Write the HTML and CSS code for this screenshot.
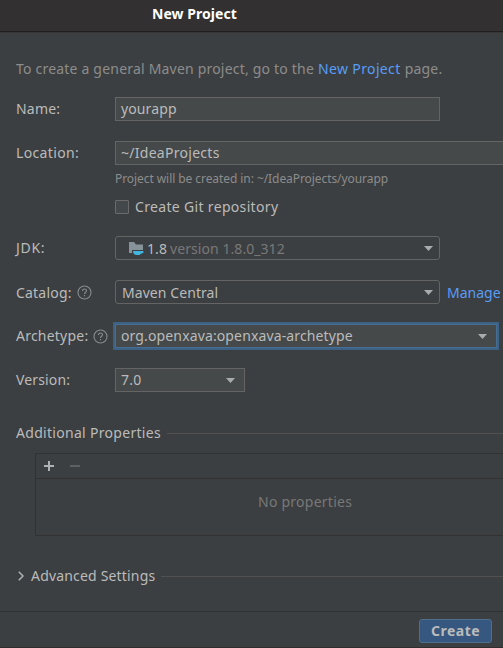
FILE: index.html
```
<!DOCTYPE html>
<html lang="en">
<head>
<meta charset="utf-8">
<title>New Project</title>
<link rel="stylesheet" href="styles.css">
</head>
<body>
<div class="dialog">
  <header class="titlebar"><span class="t-title">New Project</span></header>
  <main class="content">
    <p class="intro"><span class="t-intro1">To create a general Maven project, go to the</span> <a class="t-introlink">New Project</a> <span class="t-intro2">page.</span></p>

    <div class="row row-name">
      <label class="label"><span class="t-name">Name:</span></label>
      <div class="field w-main"><span class="t-yourapp">yourapp</span></div>
    </div>
    <div class="row row-location">
      <label class="label"><span class="t-location">Location:</span></label>
      <div class="field w-wide"><span class="t-path">~/IdeaProjects</span></div>
    </div>
    <div class="hint"><span class="t-hint">Project will be created in: ~/IdeaProjects/yourapp</span></div>
    <div class="check"><span class="box"></span><span class="t-git">Create Git repository</span></div>

    <div class="row row-jdk">
      <label class="label"><span class="t-jdk">JDK:</span></label>
      <div class="field combo jdk w-main">
        <svg class="folder" width="16" height="16" viewBox="0 0 16 16"><path d="M1 2h5l2 2.500h7V10H4v3H1z" fill="#87939a"/><path d="M5 11h9.500c1.500 0 1.500 2.400-.8 2.400h-.8c-.5 1-1.300 1.600-2.400 1.600H8.500C6.500 15 5 13.500 5 11z" fill="#40b6e0"/></svg>
        <span class="t-18">1.8</span><span class="muted t-version18">version 1.8.0_312</span>
        <svg class="arrow" width="9" height="5"><path d="M0 0h9L4.500 5z"/></svg>
      </div>
    </div>
    <div class="row row-catalog">
      <label class="label"><span class="t-catalog">Catalog:</span>
        <svg class="help" width="15" height="15" viewBox="0 0 15 15"><circle cx="7.500" cy="7.500" r="6.500"/><path d="M5.500 6c0-2.700 4-2.600 4-.2 0 1.500-2 1.500-2 3.200M7.500 10v1.300"/></svg>
      </label>
      <div class="field combo catalog w-main"><span class="t-central">Maven Central</span>
        <svg class="arrow" width="9" height="5"><path d="M0 0h9L4.500 5z"/></svg>
      </div>
      <a class="manage t-manage">Manage</a>
    </div>
    <div class="row row-archetype">
      <label class="label"><span class="t-archetype">Archetype:</span>
        <svg class="help" width="15" height="15" viewBox="0 0 15 15"><circle cx="7.500" cy="7.500" r="6.500"/><path d="M5.500 6c0-2.700 4-2.600 4-.2 0 1.500-2 1.500-2 3.200M7.500 10v1.300"/></svg>
      </label>
      <div class="field focused"><span class="t-org">org.openxava:openxava-archetype</span>
        <svg class="arrow" width="9" height="5"><path d="M0 0h9L4.500 5z"/></svg>
      </div>
    </div>
    <div class="row row-version">
      <label class="label"><span class="t-version">Version:</span></label>
      <div class="field w-small"><span class="t-70">7.0</span>
        <svg class="arrow" width="9" height="5"><path d="M0 0h9L4.500 5z"/></svg>
      </div>
    </div>

    <div class="section section-props"><span class="t-additional">Additional Properties</span><span class="rule"></span></div>
    <div class="table">
      <div class="toolbar">
        <svg width="10" height="10"><path d="M0 5h10M5 0v10" stroke="#afb1b3" stroke-width="2"/></svg>
        <svg width="10" height="10"><path d="M0 5h10" stroke="#5e5f60" stroke-width="2"/></svg>
      </div>
      <div class="empty"><span class="t-noprops">No properties</span></div>
    </div>

    <div class="section section-advanced">
      <svg class="chevron" width="6" height="10"><path d="M.8 .8L5 5 .8 9.200"/></svg>
      <span class="t-advanced">Advanced Settings</span><span class="rule"></span>
    </div>
  </main>
  <footer class="footer"><button class="create"><span class="t-create">Create</span></button></footer>
</div>
</body>
</html>
```

FILE: styles.css
```
* { box-sizing: border-box; }
body {
  margin: 0;
  background: #3c3f41;
  color: #bbbbbb;
  font: 14px/20px "Noto Sans", "Open Sans", sans-serif;
}
.dialog { width: 503px; height: 648px; overflow: hidden; display: flex; flex-direction: column; white-space: nowrap; }
.dialog span, .dialog a { flex-shrink: 0; }
.titlebar {
  height: 33px;
  flex: none;
  padding: 4px 0 0 152px;
  background: #333031;
  border-bottom: 1px solid #373737;
  box-shadow: inset 0 -1px #1f1f1f;
  color: #ffffff;
  font-weight: 700;
}
.content { flex: 1; padding: 26px 0 0 16px; min-height: 0; }
.intro { margin: 0; display: flex; gap: 4px; height: 20px; color: #8c8c8c; }
a { color: #589df6; }

.row { display: flex; align-items: center; height: 24px; }
.label { width: 99px; flex: none; display: flex; align-items: center; gap: 5px; }
.help { fill: none; stroke: #878b8d; stroke-width: 1.1; }
.field {
  height: 24px;
  flex: none;
  display: flex;
  align-items: center;
  padding: 0 6px 0 5px;
  background: #45494a;
  border: 1px solid #646464;
}
.w-main { width: 325px; }
.w-wide { width: 400px; }
.w-small { width: 130px; padding-right: 9px; }
.combo { background: #3c3f41; border-radius: 3px; }
.arrow { margin-left: auto; fill: #a9abac; flex: none; }
.jdk { padding-left: 12px; }
.jdk span { padding-top: 2px; }
.folder { margin-right: 3px; flex: none; }
.muted { color: #787878; margin-left: 3px; }
.catalog { padding-left: 6px; }
.row-catalog span, .manage { padding-top: 2px; }
.manage { margin-left: 7px; }
.focused { width: 382px; padding-right: 9px; border-color: #466d94; box-shadow: 0 0 0 2px #3d6185; }

.row-name { margin-top: 18px; }
.row-location { margin-top: 20px; }
.hint { height: 16px; margin: 6px 0 0 99px; font-size: 12px; line-height: 16px; color: #8c8c8c; }
.check { display: flex; align-items: center; gap: 6px; height: 20px; margin: 10px 0 0 99px; }
.box { width: 14px; height: 14px; background: #43494a; border: 1px solid #6b6b6b; border-radius: 1px; }
.row-jdk { margin-top: 19px; }
.row-catalog { margin-top: 20px; }
.row-archetype { margin-top: 20px; }
.row-version { margin-top: 20px; }

.section { display: flex; align-items: center; height: 20px; gap: 6px; }
.section-props { margin-top: 31px; }
.rule { flex: 1; height: 1px; background: #515151; }
.table { height: 83px; margin: 10px 0 0 19px; border: 1px solid #323232; border-right: 0; }
.toolbar { height: 25px; display: flex; align-items: center; gap: 16px; padding-left: 8px; border-bottom: 1px solid #323232; }
.empty { height: 56px; padding: 13px 0 0 222px; color: #787878; }
.section-advanced { margin-top: 30px; }
.chevron { margin: 0 1px 0 2px; fill: none; stroke: #afb1b3; stroke-width: 1.5; }

.footer { height: 37px; flex: none; border-top: 1px solid #2f3133; border-bottom: 1px solid #2f2d2e; display: flex; justify-content: flex-end; padding: 7px 11px 0 0; }
.create {
  width: 73px;
  height: 24px;
  padding: 0;
  border: 1px solid #4c708c;
  border-radius: 3px;
  background: #365880;
  color: #bbbbbb;
  font: 700 14px/20px "Noto Sans", "Open Sans", sans-serif;
}

/* Tracking per text run */
.t-title { letter-spacing: .05px; }
.t-intro1 { letter-spacing: .2px; }
.t-introlink { letter-spacing: .36px; }
.t-intro2 { letter-spacing: .2px; }
.t-name { letter-spacing: .2px; }
.t-location { letter-spacing: .35px; }
.t-yourapp { letter-spacing: .12px; }
.t-path { letter-spacing: .28px; }
.t-hint { letter-spacing: -.07px; }
.t-git { letter-spacing: .33px; }
.t-jdk { letter-spacing: .7px; }
.t-18 { letter-spacing: .1px; }
.t-version18 { letter-spacing: .06px; }
.t-catalog { letter-spacing: .2px; }
.t-central { letter-spacing: .07px; }
.t-archetype { letter-spacing: .22px; }
.t-org { letter-spacing: .13px; }
.t-version { letter-spacing: .15px; }
.t-70 { letter-spacing: .2px; }
.t-additional { letter-spacing: .3px; }
.t-noprops { letter-spacing: .25px; }
.t-advanced { letter-spacing: .18px; }
.t-create { letter-spacing: .5px; }
```
